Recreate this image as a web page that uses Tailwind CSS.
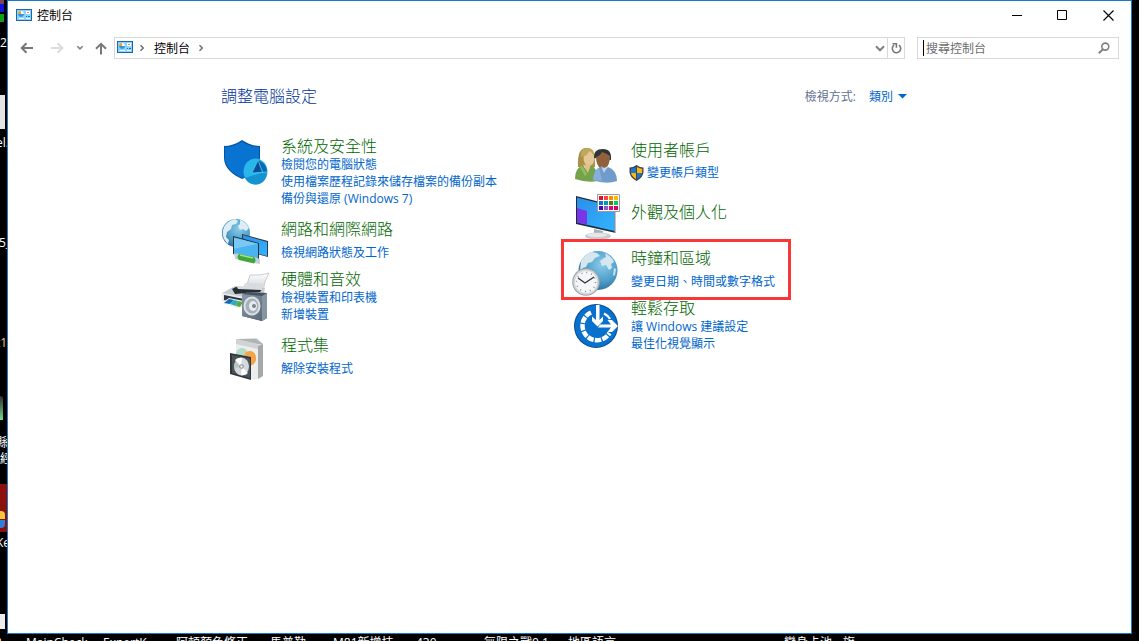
<!DOCTYPE html>
<html lang="zh-Hant">
<head>
<meta charset="utf-8">
<title>控制台</title>
<script src="https://cdn.jsdelivr.net/npm/@tailwindcss/browser@4"></script>
</head>
<body class="relative h-screen overflow-hidden bg-black font-['Open_Sans','Noto_Sans_CJK_TC',sans-serif] text-xs leading-[17px] text-black">

<!-- desktop items behind the window -->
<div class="text-white">
  <span class="absolute left-0 top-0 h-1 w-1 bg-[#804060]"></span>
  <span class="absolute left-0 top-1 h-2 w-1 bg-[#1414d8]"></span>
  <span class="absolute left-0 top-[14px] h-2 w-1 bg-[#10a010]"></span>
  <span class="absolute left-0 top-[34px]">2</span>
  <span class="absolute left-0 top-[95px] h-[34px] w-[5px] bg-[#e4e4e4]"></span>
  <span class="absolute -left-1 top-[134px]">el.</span>
  <span class="absolute -left-px top-[234px]">5_</span>
  <span class="absolute -left-1 top-[334px] text-[#f0c090]">t1</span>
  <span class="absolute left-0 top-[396px] h-6 w-[3px] rounded-tr bg-linear-to-b from-[#303030] to-[#70e080]"></span>
  <span class="absolute -left-1 top-[434px]">縣</span>
  <span class="absolute left-0 top-[450px]">經</span>
  <span class="absolute left-0 top-[484px] h-12 w-[7px] bg-[#8c100c]"></span>
  <span class="absolute left-0 top-[511px] h-2 w-[5px] rounded-tr bg-[#f8c840]"></span>
  <span class="absolute left-0 top-[520px] h-2 w-[5px] rounded-br bg-[#3080d8]"></span>
  <span class="absolute -left-1 top-[534px]">Ke</span>
  <span class="absolute left-0 top-[614px] h-[15px] w-[5px] bg-[#ececec]"></span>
  <span class="absolute -left-1 top-[634px]">?</span>
  <span class="absolute left-[26px] top-[634px] whitespace-nowrap">MainCheck</span>
  <span class="absolute left-[103px] top-[634px] whitespace-nowrap">ExpertK</span>
  <span class="absolute left-[176px] top-[634px] whitespace-nowrap">阿頓顏色修正</span>
  <span class="absolute left-[270px] top-[634px] whitespace-nowrap">馬普勒</span>
  <span class="absolute left-[333px] top-[634px] whitespace-nowrap">M81新增技</span>
  <span class="absolute left-[416px] top-[634px] whitespace-nowrap">430</span>
  <span class="absolute left-[484px] top-[634px] whitespace-nowrap">無限之戰0.1</span>
  <span class="absolute left-[568px] top-[634px] whitespace-nowrap">地區語言</span>
  <span class="absolute left-[784px] top-[634px] whitespace-nowrap">變身卡池</span>
  <span class="absolute left-[843px] top-[634px] whitespace-nowrap">旗</span>
</div>

<!-- shared symbols and gradients -->
<svg class="absolute h-0 w-0" aria-hidden="true">
  <symbol id="panel" viewBox="0 0 16 12">
    <rect width="16" height="12" fill="#1769aa"/><rect x="1" y="1" width="14" height="10" fill="#8bd3fa"/>
    <circle cx="5" cy="5" r="3" fill="#f4faff"/><path d="M5 5V2a3 3 0 0 0-3 3z" fill="#f59b20"/><path d="M5 5H2a3 3 0 0 0 6 0z" fill="#2e98e4"/>
    <path d="M10 2h4v3h-4zM3 9h5v1H3z" fill="#fff"/><path d="M11 3h2v1h-2z" fill="#f08a24"/><path d="M10 7h1v1h-1zM12 7h2v1h-2z" fill="#1a70b8"/><path d="M10 9h4v1h-4z" fill="#fff"/>
  </symbol>
  <symbol id="chev" viewBox="0 0 6 8"><path d="M1.5 1.2 4.3 4 1.5 6.8" fill="none" stroke="#707070" stroke-width="1.5"/></symbol>
  <radialGradient id="globe" cx=".6" cy=".35" r=".7"><stop stop-color="#8ccbe8"/><stop offset=".6" stop-color="#4d9fca"/><stop offset="1" stop-color="#2b6c9c"/></radialGradient>
  <linearGradient id="scr" x2="1" y2="1"><stop stop-color="#2b8fe8"/><stop offset="1" stop-color="#32b4ff"/></linearGradient>
  <linearGradient id="metal" x2="1" y2="1"><stop stop-color="#8a98a6"/><stop offset="1" stop-color="#59697a"/></linearGradient>
  <linearGradient id="paper" x2="0" y2="1"><stop stop-color="#fff"/><stop offset="1" stop-color="#c8ccd0"/></linearGradient>
</svg>

<div class="absolute inset-x-[7px] bottom-[7px] top-0 flex flex-col border border-[#1a7bc9] bg-white">
  <header class="flex h-7 items-center pl-2">
    <svg class="h-3 w-4"><use href="#panel"/></svg>
    <h1 class="ml-[5px] grow">控制台</h1>
    <button aria-label="最小化" class="grid h-7 w-[46px] place-items-center"><svg class="h-[11px] w-[11px]" viewBox="0 0 11 11"><path d="M1 5.5h10" stroke="#000"/></svg></button>
    <button aria-label="最大化" class="grid h-7 w-[46px] place-items-center"><svg class="h-[11px] w-[11px]" viewBox="0 0 11 11"><path d="M.5.5h9v9H.5z" fill="none" stroke="#000"/></svg></button>
    <button aria-label="關閉" class="grid h-7 w-[46px] place-items-center"><svg class="h-[11px] w-[11px]" viewBox="0 0 11 11"><path d="m.5.5 10 10m0-10-10 10" stroke="#000" stroke-width="1.1"/></svg></button>
  </header>

  <nav class="mt-2 flex h-[22px] items-center pr-3 pl-3">
    <button aria-label="上一頁"><svg class="h-3 w-[14px]" viewBox="0 0 14 12" fill="none" stroke="#777" stroke-width="2"><path d="M13 6H2M6.5 1.2 1.7 6l4.8 4.8"/></svg></button>
    <button aria-label="下一頁" class="ml-4"><svg class="h-3 w-[14px]" viewBox="0 0 14 12" fill="none" stroke="#dcdcdc" stroke-width="2"><path d="M1 6h11M7.5 1.2 12.3 6l-4.8 4.8"/></svg></button>
    <button aria-label="最近的位置" class="ml-3"><svg class="h-[6px] w-2" viewBox="0 0 8 6" fill="none" stroke="#808080" stroke-width="1.5"><path d="m1.3 1.2 2.7 2.7 2.7-2.7"/></svg></button>
    <button aria-label="上一層" class="ml-[11px]"><svg class="h-[13px] w-3" viewBox="0 0 12 13" fill="none" stroke="#777" stroke-width="2"><path d="M6 12.5V2M1 6.8 6 1.8l5 5"/></svg></button>
    <div class="ml-[7px] flex h-[22px] grow items-center border border-[#d9d9d9] pl-0.5">
      <svg class="mb-0.5 h-3 w-4"><use href="#panel"/></svg>
      <svg class="ml-[6px] h-2 w-[6px]"><use href="#chev"/></svg>
      <a href="#" class="ml-[9px]">控制台</a>
      <svg class="ml-2 h-2 w-[6px]"><use href="#chev"/></svg>
      <button aria-label="先前的位置" class="ml-auto mr-0.5"><svg class="h-[7px] w-[10px]" viewBox="0 0 10 7" fill="none" stroke="#808080" stroke-width="2"><path d="m1 1.3 4 4 4-4"/></svg></button>
      <button aria-label="重新整理" class="grid h-5 w-[17px] place-items-center border-l border-[#d9d9d9]"><svg class="h-3 w-[11px]" viewBox="0 0 11 12" fill="none" stroke="#777" stroke-width="1.6"><path d="M7.9 3.1A4.2 4.2 0 1 1 3 3.2M1.500 1.8H5.400V5.800"/></svg></button>
    </div>
    <label class="ml-3 flex h-[22px] w-[202px] items-center border border-[#d9d9d9] pl-[5px] pr-2">
      <span class="h-4 w-px bg-black"></span>
      <input type="text" aria-label="搜尋控制台" placeholder="搜尋控制台" class="ml-0.5 w-0 grow outline-none placeholder:text-[#6d6d6d]">
      <svg class="h-3 w-3" viewBox="0 0 12 12" fill="none" stroke="#808080"><circle cx="7.3" cy="4.6" r="3.5" stroke-width="1.6"/><path d="M5 7.2.8 11.2" stroke-width="2"/></svg>
    </label>
  </nav>

  <main class="ml-[213px] mt-[25px] w-[686px] text-[#0066cc]">
    <div class="flex h-6 items-center">
      <h2 class="grow text-base font-light leading-5 text-[#003399]">調整電腦設定</h2>
      <span class="text-[#5f6f8f]">檢視方式:</span>
      <button class="ml-[13px] flex items-center gap-[5px]">類別<svg class="h-[5px] w-[9px]" viewBox="0 0 9 5"><path d="M0 0h9L4.5 4.6z" fill="#0066cc"/></svg></button>
    </div>

    <div class="mt-7 grid grid-cols-[350px_336px]">
      <div>
        <section class="flex gap-3">
          <svg class="mt-0.5 h-12 w-12 shrink-0" viewBox="0 0 48 48">
            <path d="M3 8c6 0 12-2 18-6 6 4 12 6 18 6v12c0 10-9 17-18 21C12 37 3 30 3 20z" fill="#0a50a0"/><path d="M4 9c6 0 12-2 17-5.500 5 3.500 11 5.500 17 5.500v11c0 9-8 16-17 20C12 36 4 29 4 20z" fill="#0873d0"/>
            <ellipse cx="34.500" cy="33.500" rx="12" ry="13" fill="#29b6ea"/><path d="M24 40c7-2 14-5 22-6 0 7-5 12.500-11 12.500-5 0-9-2.500-11-6.500z" fill="#1593d0"/><path d="m37 22-6 13 15-1c0-6-4-10-9-12z" fill="#0868b6"/><path d="m31 35 6-13 3 12z" fill="#074f96"/>
            <path d="m37 22-6 13 15-1M37 22l5 13" stroke="#5cd2f7" stroke-width=".7" fill="none"/>
          </svg>
          <div><h3 class="text-base font-light leading-5 text-[#006600]"><a href="#">系統及安全性</a></h3>
            <a href="#" class="block">檢閱您的電腦狀態</a><a href="#" class="block">使用檔案歷程記錄來儲存檔案的備份副本</a><a href="#" class="block">備份與還原 (Windows 7)</a></div>
        </section>
        <section class="mt-[10px] flex gap-3">
          <svg class="h-12 w-12 shrink-0" viewBox="0 0 48 48">
            <circle cx="15" cy="16" r="14" fill="url(#globe)"/>
            <path d="M3 10c3-5 7-7 11-8l3 2-2 3-4 1-1 4-4 3-1 5 3 3-1 4c-4-4-7-9-4-17zM19 3c4 1 7 4 9 8l-3 3-3-2-3 1-2-4 2-2z" fill="#dcedf5"/>
            <path d="m21 17 26 7v16l-26-7z" fill="#303a44"/><path d="m22 18 24 7v14l-24-6z" fill="url(#scr)"/>
            <path d="m12 19 26 7v18l-26-7z" fill="#27313a"/><path d="m13 20.500 24 6.300V42l-24-6z" fill="#49b4ef"/><path d="m13 20.500 24 6.300-24 5z" fill="#78c9f5"/>
            <path d="m13 36 6 1v6l-5-1zM33 40l6 2v5l-6-1z" fill="#c7d0d4"/><path d="m18 37 15 3q3 3 0 6.500L18 43q-3-3 0-6z" fill="#42a63e"/><path d="m19 38 13 3" stroke="#a2e47d" stroke-width="1.500"/>
          </svg>
          <div class="pt-0.5"><h3 class="text-base font-light leading-5 text-[#006600]"><a href="#">網路和網際網路</a></h3>
            <a href="#" class="mt-[5px] block">檢視網路狀態及工作</a></div>
        </section>
        <section class="mt-1 flex gap-3">
          <svg class="mt-[3px] h-12 w-12 shrink-0 overflow-visible" viewBox="0 0 48 48">
            <path d="M29 3q10 1 19-2-5 8-6 19H22q5-8 7-17z" fill="url(#paper)" stroke="#a8adb1" stroke-width=".6"/>
            <path d="m1 21 13-7 30 2-3 18-15 3-25-9z" fill="#c7ccd0"/><path d="m11 17 4-2 27 1-3 4-25 2z" fill="#262e36"/><path d="m16 15 6 0 2-4 20 1-3 6-24-1z" fill="#d8dcdf"/><path d="m1 21 23 4v10L1 28z" fill="#e8ebed"/><path d="m3 23 20 4v6L3 28z" fill="#2d3740"/>
            <path d="m1 31 7-5 15 3-4 8z" fill="#eef2f4"/><path d="m3 31 5-4 5 1-4 4z" fill="#1769b4"/><path d="m9 32 4-4 4 1-2 5z" fill="#27b0c4"/><path d="m15 34 2-5 5 1-3 5z" fill="#60a83c"/>
            <path d="m21 22 5-2 20 1v25l-5 3-20-5z" fill="#47545f"/><path d="m21 22 20 2v25l-20-5z" fill="url(#metal)"/><path d="m41 24 5-3v25l-5 3z" fill="#8795a1"/>
            <ellipse cx="31" cy="34" rx="8.500" ry="9.500" fill="#dce1e5"/><ellipse cx="31" cy="34" rx="6.500" ry="7.500" fill="#a6b0b9"/><ellipse cx="32" cy="34" rx="4" ry="5" fill="#e7ebee"/><circle cx="33" cy="34" r="2" fill="#78848e"/>
          </svg>
          <div><h3 class="text-base font-light leading-5 text-[#006600]"><a href="#">硬體和音效</a></h3>
            <a href="#" class="block">檢視裝置和印表機</a><a href="#" class="block">新增裝置</a></div>
        </section>
        <section class="mt-3 flex gap-3">
          <svg class="h-12 w-12 shrink-0" viewBox="0 0 48 48">
            <path d="m15 4 21-1 6 6v31l-8 4-19-4z" fill="#d7d9da"/><path d="m15 8 22 3v33l-22-4z" fill="#eceeed"/><path d="m37 11 5-2v32l-5 3z" fill="#a5a8aa"/><path d="m15 4 22 5 5 0-7-5z" fill="#b0b4b6"/><path d="m15 4 22 6v4l-22-5z" fill="#d0d3d5"/>
            <circle cx="21" cy="19" r="6" fill="#b4dbc7"/><path d="M23 22q1-7 7-6 6 2 5 9-2 7-8 5z" fill="#f3a448"/>
            <path d="m9 18 21 4v23L9 39z" fill="#30353a"/><path d="m11 20 18 3.500V43l-18-5z" fill="#4b545b"/><ellipse cx="20.500" cy="31.500" rx="7.500" ry="9" fill="#d5d9dc"/><path d="m20 32-6-7q3-3 7-2zM21 32l6 6q-3 3-7 2z" fill="#fff"/><path d="m20 32-7 1q0-4 2-7z" fill="#b8c8be"/><circle cx="20.500" cy="31.500" r="2.300" fill="#8a9499"/><circle cx="20.500" cy="31.500" r="1.200" fill="#eee"/>
          </svg>
          <div><h3 class="text-base font-light leading-5 text-[#006600]"><a href="#">程式集</a></h3>
            <a href="#" class="mt-[5px] block">解除安裝程式</a></div>
        </section>
      </div>

      <div class="pt-1">
        <section class="flex gap-3">
          <svg class="mt-0.5 h-12 w-12 shrink-0" viewBox="0 0 48 48">
            <path d="M7 25Q6 6 15 6q10-1 9 19z" fill="#a98f48"/><ellipse cx="18" cy="16" rx="5.500" ry="8" fill="#e4c794"/><path d="M10 15q7-1 8-6 3 1 5 5 1-8-7-8-7 0-6 9z" fill="#c1a75b"/><path d="M4 37q0-11 7-13l5 3 4-4q6 2 7 16-11 2-23-2z" fill="#75a34b"/><path d="m12 23 5 8 3-9z" fill="#e2c08a"/><path d="m11 24 5 8-2 2-5-9z" fill="#92bd62"/>
            <path d="M23 16q-1-9 9-9 9 0 8 11z" fill="#303437"/><path d="M25 15q4-1 6-5 4 1 8 4 0 9-5 13h-4q-5-4-5-12z" fill="#91613c"/><path d="M22 38q1-12 8-13l3 4 4-4q9 3 9 14-11 4-24-1z" fill="#709bca"/><path d="m30 24 3 7 4-7-4 2z" fill="#b8d5f1"/><path d="M22 38q1-10 6-12l3 13z" fill="#86b0dc"/>
          </svg>
          <div><h3 class="text-base font-light leading-5 text-[#006600]"><a href="#">使用者帳戶</a></h3>
            <a href="#" class="-ml-0.5 mt-1 flex items-center gap-[3px]"><svg class="h-4 w-[15px]" viewBox="0 0 15 16"><path d="M7.500 0Q11 2.500 14.500 2.500V7q0 5-7 9-7-4-7-9V2.500Q4 2.500 7.500 0z" fill="#3f4347"/><path d="M7 2v6H1.800V3.700Q4.500 3.500 7 2zM8 8h5q-.8 3.500-5 6.200z" fill="#1c78d0"/><path d="M8 2q2.500 1.500 5.200 1.700V8H8zM2 8h5v6.200Q2.800 11.500 2 8z" fill="#fbb813"/></svg>變更帳戶類型</a></div>
        </section>
        <section class="mt-[3px] flex gap-3">
          <svg class="h-12 w-12 shrink-0 overflow-visible" viewBox="0 0 48 48">
            <path d="m23 36 9 2v5h-9z" fill="#a9b1b7"/><ellipse cx="27" cy="43" rx="13" ry="3.500" fill="#c6ccd0"/><ellipse cx="26" cy="42" rx="10" ry="2" fill="#e4e8ea"/>
            <path d="m5 3 40 10v27L5 31z" fill="#1e2a38"/><path d="m6 4.500 37.500 9.500v24L6 29.500z" fill="url(#scr)"/><path d="m6 15 10 3v13.500l-10-2z" fill="#7a35e8"/><path d="m43.500 13 1.500.5V40l-1.500-.5z" fill="#bcc4ca"/>
            <path d="M26.500 1.500h22v17h-22z" fill="#fff" stroke="#9a9a9a"/>
            <path d="M28 3h4v4h-4z" fill="#e81123"/><path d="M33 3h4v4h-4z" fill="#ff4545"/><path d="M38 3h4v4h-4z" fill="#ff8c00"/><path d="M43 3h4v4h-4z" fill="#ffb900"/>
            <path d="M28 8h4v4h-4z" fill="#0078d7"/><path d="M33 8h4v4h-4z" fill="#0099bc"/><path d="M38 8h4v4h-4z" fill="#498205"/><path d="M43 8h4v4h-4z" fill="#00cc6a"/>
            <path d="M28 13h4v4h-4z" fill="#4b00c8"/><path d="M33 13h4v4h-4z" fill="#8764b8"/><path d="M38 13h4v4h-4z" fill="#e3008c"/><path d="M43 13h4v4h-4z" fill="#d80060"/>
          </svg>
          <div class="pt-[9px]"><h3 class="text-base font-light leading-5 text-[#006600]"><a href="#">外觀及個人化</a></h3></div>
        </section>
        <section class="relative mt-[7px] flex gap-3">
          <span class="pointer-events-none absolute -left-[10px] -top-[9px] z-10 h-[61px] w-[230px] border-3 border-[#fa3737]"></span>
          <svg class="h-12 w-12 shrink-0" viewBox="0 0 48 48">
            <circle cx="27" cy="22.500" r="19.500" fill="url(#globe)"/>
            <path d="M10 13q4-7 11-9l5 1 3 3-5 2-3 4-4 1-2 4-3 1-3 3zM34 5q7 4 9 9l-3 2 1 4-3 2-3-5-4 1-2-5 4-3 2-1z" fill="#d5e6ee"/><path d="m43 20 2 1-1 6-2 1z" fill="#cfe2ea"/>
            <circle cx="15" cy="34" r="13.800" fill="#9da4aa"/><circle cx="15" cy="34" r="12.700" fill="#d4d8da"/><circle cx="15" cy="34" r="11" fill="#f5f6f7"/><circle cx="15" cy="34" r="9.500" fill="none" stroke="#8b9298" stroke-width="1.500" stroke-dasharray="1 3.974"/>
            <path d="m7 30 7 5 9-6" fill="none" stroke="#30363b" stroke-width="1.400"/>
          </svg>
          <div><h3 class="text-base font-light leading-5 text-[#006600]"><a href="#">時鐘和區域</a></h3>
            <a href="#" class="mt-[5px] block">變更日期、時間或數字格式</a></div>
        </section>
        <section class="mt-0.5 flex gap-3">
          <svg class="mt-1 h-12 w-12 shrink-0" viewBox="0 0 48 48">
            <circle cx="25" cy="24" r="22" fill="#084c94"/><circle cx="25" cy="24" r="21" fill="#0870cd"/>
            <path d="M20 10.500A14.500 14.500 0 1 0 38.500 31" fill="none" stroke="#fff" stroke-width="4.500" stroke-dasharray="6.200 1.200"/><path d="M33 11.500q4 2 6 5.500" fill="none" stroke="#fff" stroke-width="2.500"/>
            <path d="M25 3h3.500v15l3.500-3.500V19l-5.500 5.500L21 19v-4.500l4 3.500z" fill="#fff"/><path d="M29 22.500h11L36.500 18H41l6 6-6 6h-4.500l3.500-4.500H27z" fill="#fff"/>
          </svg>
          <div><h3 class="text-base font-light leading-5 text-[#006600]"><a href="#">輕鬆存取</a></h3>
            <a href="#" class="block">讓 Windows 建議設定</a><a href="#" class="block">最佳化視覺顯示</a></div>
        </section>
      </div>
    </div>
  </main>
</div>
</body>
</html>
